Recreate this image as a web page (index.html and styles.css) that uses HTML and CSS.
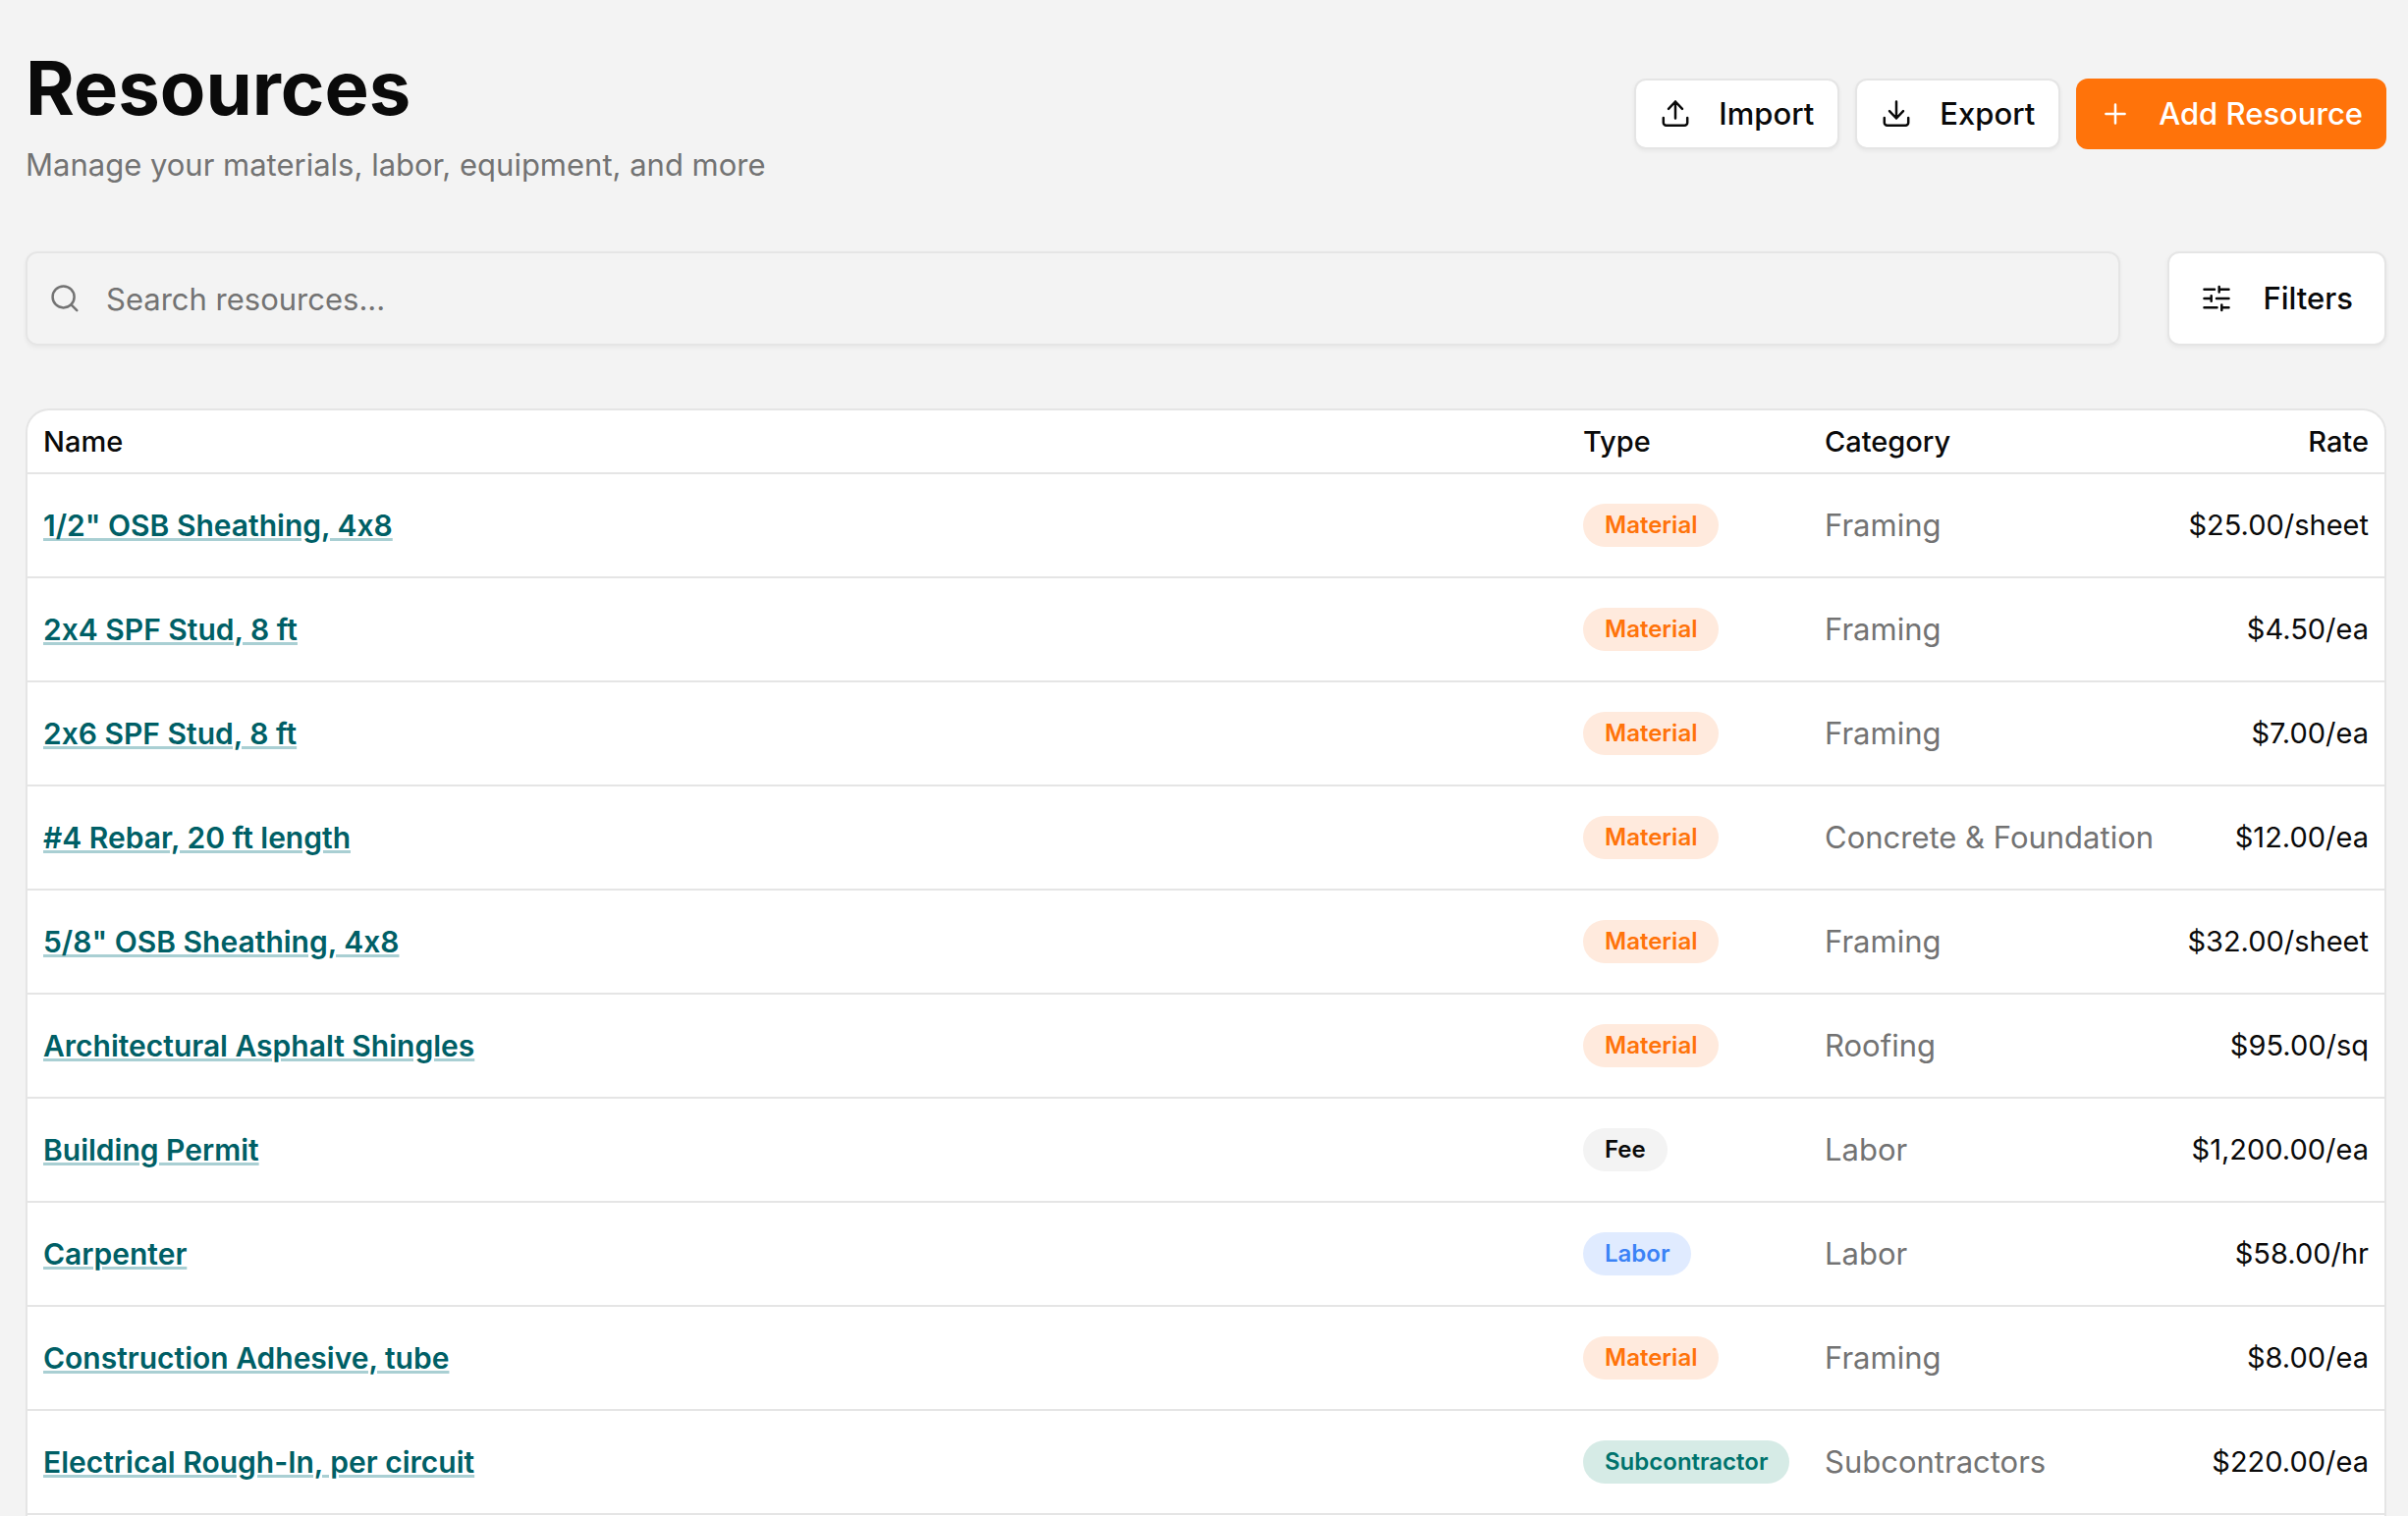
FILE: index.html
```
<!DOCTYPE html>
<html lang="en">
<head>
    <meta charset="UTF-8">
    <meta name="viewport" content="width=device-width, initial-scale=1.0">
    <title>Resources</title>
    <link rel="stylesheet" href="styles.css">
</head>
<body>
    <main class="page">
        <header class="page-header">
            <div class="heading">
                <h1>Resources</h1>
                <p>Manage your materials, labor, equipment, and more</p>
            </div>
            <div class="actions">
                <button class="btn" type="button">
                    <svg class="icon" viewBox="0 0 32 32" aria-hidden="true"><path d="M3.8 20v5a2.8 2.8 0 0 0 2.8 2.8h18.8a2.8 2.8 0 0 0 2.8-2.8v-5M16 20.5v-17M9 10.8l7-7.3 7 7.3"/></svg>
                    Import
                </button>
                <button class="btn" type="button">
                    <svg class="icon" viewBox="0 0 32 32" aria-hidden="true"><path d="M3.8 20v5a2.8 2.8 0 0 0 2.8 2.8h18.8a2.8 2.8 0 0 0 2.8-2.8v-5M16 3.5v17M9 13.2l7 7.3 7-7.3"/></svg>
                    Export
                </button>
                <button class="btn btn-primary" type="button">
                    <svg class="icon" viewBox="0 0 32 32" aria-hidden="true"><path d="M16 6.4v19.2M6.4 16h19.2"/></svg>
                    Add Resource
                </button>
            </div>
        </header>

        <div class="toolbar">
            <label class="search">
                <svg class="icon" viewBox="0 0 32 32" aria-hidden="true"><circle cx="14.6" cy="14.4" r="11"/><path d="M22.5 22.3l5.8 5.8"/></svg>
                <input type="text" placeholder="Search resources..." aria-label="Search resources">
            </label>
            <button class="btn btn-filters" type="button">
                <svg class="icon" viewBox="0 0 32 32" aria-hidden="true"><path d="M3.5 6.7H14M18.7 6.7h9.8M18.7 4v5.4M3.5 16h7.2M10.7 13.3v5.4M16 16h12.5M3.5 25.3h13M21.3 25.3h7.2M21.3 22.6V28"/></svg>
                Filters
            </button>
        </div>

        <div class="table-card">
            <table>
                <colgroup>
                    <col>
                    <col class="col-type">
                    <col class="col-category">
                    <col class="col-rate">
                </colgroup>
                <thead>
                    <tr>
                        <th scope="col">Name</th>
                        <th scope="col">Type</th>
                        <th scope="col">Category</th>
                        <th scope="col" class="rate">Rate</th>
                    </tr>
                </thead>
                <tbody>
                    <tr>
                        <td><a href="#">1/2" OSB Sheathing, 4x8</a></td>
                        <td><span class="badge material">Material</span></td>
                        <td class="category">Framing</td>
                        <td class="rate">$25.00/sheet</td>
                    </tr>
                    <tr>
                        <td><a href="#">2x4 SPF Stud, 8 ft</a></td>
                        <td><span class="badge material">Material</span></td>
                        <td class="category">Framing</td>
                        <td class="rate">$4.50/ea</td>
                    </tr>
                    <tr>
                        <td><a href="#">2x6 SPF Stud, 8 ft</a></td>
                        <td><span class="badge material">Material</span></td>
                        <td class="category">Framing</td>
                        <td class="rate">$7.00/ea</td>
                    </tr>
                    <tr>
                        <td><a href="#">#4 Rebar, 20 ft length</a></td>
                        <td><span class="badge material">Material</span></td>
                        <td class="category">Concrete &amp; Foundation</td>
                        <td class="rate">$12.00/ea</td>
                    </tr>
                    <tr>
                        <td><a href="#">5/8" OSB Sheathing, 4x8</a></td>
                        <td><span class="badge material">Material</span></td>
                        <td class="category">Framing</td>
                        <td class="rate">$32.00/sheet</td>
                    </tr>
                    <tr>
                        <td><a href="#">Architectural Asphalt Shingles</a></td>
                        <td><span class="badge material">Material</span></td>
                        <td class="category">Roofing</td>
                        <td class="rate">$95.00/sq</td>
                    </tr>
                    <tr>
                        <td><a href="#">Building Permit</a></td>
                        <td><span class="badge fee">Fee</span></td>
                        <td class="category">Labor</td>
                        <td class="rate">$1,200.00/ea</td>
                    </tr>
                    <tr>
                        <td><a href="#">Carpenter</a></td>
                        <td><span class="badge labor">Labor</span></td>
                        <td class="category">Labor</td>
                        <td class="rate">$58.00/hr</td>
                    </tr>
                    <tr>
                        <td><a href="#">Construction Adhesive, tube</a></td>
                        <td><span class="badge material">Material</span></td>
                        <td class="category">Framing</td>
                        <td class="rate">$8.00/ea</td>
                    </tr>
                    <tr>
                        <td><a href="#">Electrical Rough-In, per circuit</a></td>
                        <td><span class="badge subcontractor">Subcontractor</span></td>
                        <td class="category">Subcontractors</td>
                        <td class="rate">$220.00/ea</td>
                    </tr>
                </tbody>
            </table>
        </div>
    </main>
</body>
</html>
```
FILE: styles.css
```
:root {
    --bg: #f3f3f3;
    --card: #ffffff;
    --border: #e5e5e5;
    --text: #0a0a0a;
    --muted: #737373;
    --primary: #ff730a;
    --link: #005f66;
    --shadow: 0 2px 4px rgba(0, 0, 0, 0.05);
}

* {
    margin: 0;
    padding: 0;
    box-sizing: border-box;
}

body {
    background: var(--bg);
    color: var(--text);
    font-family: Inter, "Liberation Sans", sans-serif;
    font-size: 31px;
    line-height: 40px;
    /* keep "4x8" as a plain x */
    font-variant-ligatures: no-contextual;
}

.page {
    display: flex;
    flex-direction: column;
    min-height: 100vh;
    padding: 40px 22px 0 26px;
}

.page-header {
    display: flex;
    justify-content: space-between;
    align-items: center;
    margin-bottom: 64px;
}

h1 {
    font-size: 76px;
    line-height: 98px;
    font-weight: 700;
    margin-bottom: 6px;
}

.heading p {
    color: var(--muted);
    line-height: 48px;
}

.actions {
    display: flex;
    gap: 16px;
}

.btn {
    display: flex;
    align-items: center;
    gap: 28px;
    padding: 14px 24px;
    border: 2px solid var(--border);
    border-radius: 12px;
    background: var(--card);
    box-shadow: var(--shadow);
    color: var(--text);
    font: inherit;
    font-weight: 500;
    cursor: pointer;
}

.btn-primary {
    padding: 16px 24px;
    border: none;
    background: var(--primary);
    box-shadow: none;
    color: #ffffff;
}

.btn-filters {
    gap: 32px;
    padding: 26px 32px;
}

.icon {
    flex: none;
    width: 32px;
    height: 32px;
    fill: none;
    stroke: currentColor;
    stroke-width: 2.5;
    stroke-linecap: round;
    stroke-linejoin: round;
}

.toolbar {
    display: flex;
    gap: 48px;
    margin-bottom: 64px;
}

.search {
    flex: 1;
    display: flex;
    align-items: center;
    gap: 26px;
    padding: 0 22px;
    border: 2px solid var(--border);
    border-radius: 12px;
    box-shadow: var(--shadow);
    color: var(--muted);
}

.search input {
    flex: 1;
    height: 92px;
    border: none;
    outline: none;
    background: transparent;
    color: var(--text);
    font: inherit;
}

.search input::placeholder {
    color: var(--muted);
    opacity: 1;
}

.table-card {
    flex: 1;
    border: 2px solid var(--border);
    border-bottom: none;
    border-radius: 24px 24px 0 0;
    background: var(--card);
    overflow: hidden;
}

table {
    width: 100%;
    table-layout: fixed;
    border-collapse: separate;
    border-spacing: 0;
}

.col-type {
    width: 246px;
}

.col-category {
    width: 360px;
}

.col-rate {
    width: 226px;
}

th,
td {
    padding: 0 16px;
    border-bottom: 2px solid var(--border);
    font-size: 29px;
    text-align: left;
    vertical-align: middle;
    white-space: nowrap;
}

th {
    height: 65px;
    font-weight: 500;
}

td {
    height: 106px;
}

td a {
    color: var(--link);
    font-size: 30px;
    font-weight: 600;
    text-decoration: underline;
    text-decoration-color: #a9cfd3;
    text-decoration-thickness: 3px;
    text-underline-offset: 2px;
}

.category {
    color: var(--muted);
    font-size: 31px;
}

th.rate,
td.rate {
    text-align: right;
}

.badge {
    display: inline-block;
    padding: 0 22px;
    border-radius: 22px;
    font-size: 24px;
    line-height: 44px;
    font-weight: 600;
    vertical-align: middle;
}

.material {
    background: #ffeadd;
    color: #ff730a;
}

.fee {
    background: #f3f3f3;
    color: var(--text);
}

.labor {
    background: #e0ebff;
    color: #3b82f6;
}

.subcontractor {
    background: #d6ebe6;
    color: #00736d;
}
```
